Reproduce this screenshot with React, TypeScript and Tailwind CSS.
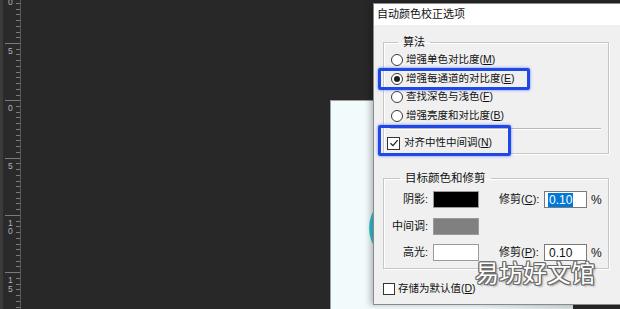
import React from 'react';

const ui = "font-['Liberation_Sans','Noto_Sans_CJK_SC',sans-serif]";

function Ruler() {
  const step = 5.73;
  const start = -14.3;
  const ticks = [];
  for (let i = 0; i < 60; i++) {
    const y = Math.round(start + i * step) + 0.5;
    if (y > 309) break;
    const major = i % 10 === 0;
    ticks.push(
      <line key={i} x1={major ? 5 : 16} x2={20} y1={y} y2={y} stroke="#7c7c7c" strokeWidth={1} />
    );
  }
  const labels = [
    { y: -14.3, t: ['1', '0'] },
    { y: 43, t: ['5'] },
    { y: 100.3, t: ['0'] },
    { y: 157.6, t: ['5'] },
    { y: 214.9, t: ['1', '0'] },
    { y: 272.2, t: ['1', '5'] },
  ];
  return (
    <svg width="21" height="309" className="shrink-0 block">
      <rect x="0" y="0" width="21" height="309" fill="#2a2a2a" />
      <rect x="0" y="0" width="3" height="309" fill="#3b3b3b" />
      <line x1="20.5" x2="20.5" y1="0" y2="309" stroke="#5a5a5a" />
      {ticks}
      {labels.map((l, i) =>
        l.t.map((c, j) => (
          <text
            key={`${i}-${j}`}
            x="8"
            y={l.y + 11 + j * 8.5}
            fontSize="8.5"
            fill="#aab4c2"
            fontFamily="Liberation Sans, sans-serif"
          >
            {c}
          </text>
        ))
      )}
    </svg>
  );
}

const Radio = ({ checked }: { checked?: boolean }) => (
  <span className="w-[12px] h-[12px] rounded-full border border-[#3a3a3a] bg-white flex items-center justify-center shrink-0">
    {checked && <span className="w-[6px] h-[6px] rounded-full bg-[#1e1e1e]" />}
  </span>
);

const Check = ({ checked, size = 'w-[12px] h-[12px]' }: { checked?: boolean; size?: string }) => (
  <span className={`${size} border border-[#333] bg-white flex items-center justify-center shrink-0`}>
    {checked && (
      <svg width="10" height="10" viewBox="0 0 10 10">
        <path d="M1.5 5.2 L4 7.6 L8.6 2.2" fill="none" stroke="#222" strokeWidth="1.3" />
      </svg>
    )}
  </span>
);

const radios = [
  { text: '增强单色对比度', key: 'M' },
  { text: '增强每通道的对比度', key: 'E', checked: true },
  { text: '查找深色与浅色', key: 'F' },
  { text: '增强亮度和对比度', key: 'B' },
];

function Dialog() {
  return (
    <div className={`absolute left-[373px] top-[3px] w-[260px] h-[302px] bg-[#f0f0f0] border border-[#8a8a8a] shadow-[-3px_0_6px_rgba(0,0,0,0.25)] text-[#111] ${ui}`}>
      <div className="h-[21px] bg-white flex items-center pl-[3px] text-[11px]">自动颜色校正选项</div>

      <div className="pl-[9px] pr-[10px]">
        <fieldset className="mt-[10px] w-[226px] border border-[#c6c6c6] shadow-[inset_1px_1px_0_#fff,1px_1px_0_#fff] pb-[1px]">
          <legend className="ml-[14px] px-[5px] text-[11px] leading-[14px]">算法</legend>
          <div className="pt-[2px] pl-[7px] text-[10.5px]">
            {radios.map((r) => (
              <div key={r.key} className="h-[18.5px] flex items-center gap-[3px]">
                <Radio checked={r.checked} />
                <span>
                  {r.text}(<u>{r.key}</u>)
                </span>
              </div>
            ))}
          </div>
          <div className="mt-[3px] ml-[6px] mr-[7px] h-px bg-[#b8b8b8] shadow-[0_1px_0_#fff]" />
          <div className="mt-[5px] h-[18px] flex items-center gap-[4px] pl-[3px] text-[10.5px]">
            <Check checked size="w-[13px] h-[13px]" />
            <span>
              对齐中性中间调(<u>N</u>)
            </span>
          </div>
        </fieldset>

        <fieldset className="mt-[17px] w-[226px] border border-[#c6c6c6] shadow-[inset_1px_1px_0_#fff,1px_1px_0_#fff] pb-[7px]">
          <legend className="ml-[16px] px-[5px] text-[11.5px] leading-[14px]">目标颜色和修剪</legend>
          <div className="pt-[6px] text-[11px] flex flex-col gap-[9px]">
            <div className="h-[17px] flex items-center">
              <span className="w-[44px] text-right whitespace-nowrap">阴影:</span>
              <span className="ml-[5px] w-[46px] h-[17px] bg-black border border-[#9a9a9a]" />
              <span className="ml-[20px] w-[43px] whitespace-nowrap">
                修剪(<u>C</u>):
              </span>
              <span className="ml-[2px] w-[43px] h-[17px] bg-white border border-[#7a7a7a] flex items-center pl-[3px] text-[12px]">
                <span className="bg-[#0078d7] text-white px-px leading-[14px]">0.10</span>
              </span>
              <span className="ml-[4px] text-[12px]">%</span>
            </div>
            <div className="h-[17px] flex items-center mt-px">
              <span className="w-[44px] text-right whitespace-nowrap">中间调:</span>
              <span className="ml-[5px] w-[46px] h-[17px] bg-[#808080] border border-[#9a9a9a]" />
            </div>
            <div className="h-[17px] flex items-center">
              <span className="w-[44px] text-right whitespace-nowrap">高光:</span>
              <span className="ml-[5px] w-[46px] h-[17px] bg-white border border-[#9a9a9a]" />
              <span className="ml-[20px] w-[43px] whitespace-nowrap">
                修剪(<u>P</u>):
              </span>
              <span className="ml-[2px] w-[43px] h-[17px] bg-white border border-[#7a7a7a] flex items-center pl-[4px] text-[12px]">
                0.10
              </span>
              <span className="ml-[4px] text-[12px]">%</span>
            </div>
          </div>
        </fieldset>

        <div className="mt-[14px] flex items-center gap-[3px] text-[10.5px] h-[12px]">
          <Check />
          <span>
            存储为默认值(<u>D</u>)
          </span>
        </div>
      </div>

      <div className="absolute left-[4px] top-[64px] w-[152px] h-[22px] border-[3px] border-[#1f48e6] rounded-[2px] shadow-[0_0_3px_#5b7cff]" />
      <div className="absolute left-[4px] top-[121px] w-[133px] h-[31px] border-[3px] border-[#1f48e6] rounded-[2px] shadow-[0_0_3px_#5b7cff]" />

      <div className="absolute left-[101px] top-[256px] text-[24px] leading-none text-white font-['Noto_Sans_CJK_SC',sans-serif] [text-shadow:1px_0_0_#6a6a6a,-1px_0_0_#6a6a6a,0_1px_0_#6a6a6a,0_-1px_0_#6a6a6a,1px_1px_0_#6a6a6a,-1px_-1px_0_#6a6a6a,1px_-1px_0_#6a6a6a,-1px_1px_0_#6a6a6a,2px_2px_2px_rgba(0,0,0,0.35)]">
        易坊好文馆
      </div>
    </div>
  );
}

export default function App() {
  return (
    <div className="relative w-[620px] h-[309px] overflow-hidden bg-[#282828] flex">
      <Ruler />
      <div className="flex-1 pt-[100px] pl-[309px]">
        <div className="relative w-[243px] h-[220px] border-l border-t border-[#9aa0a2] bg-[linear-gradient(to_right,#f2fbfc_60%,#d8e0e2)] overflow-hidden">
          <div className="absolute left-[38px] top-[92px] w-[70px] h-[70px] rounded-full bg-[#2ec4d4]" />
        </div>
      </div>
      <Dialog />
    </div>
  );
}
